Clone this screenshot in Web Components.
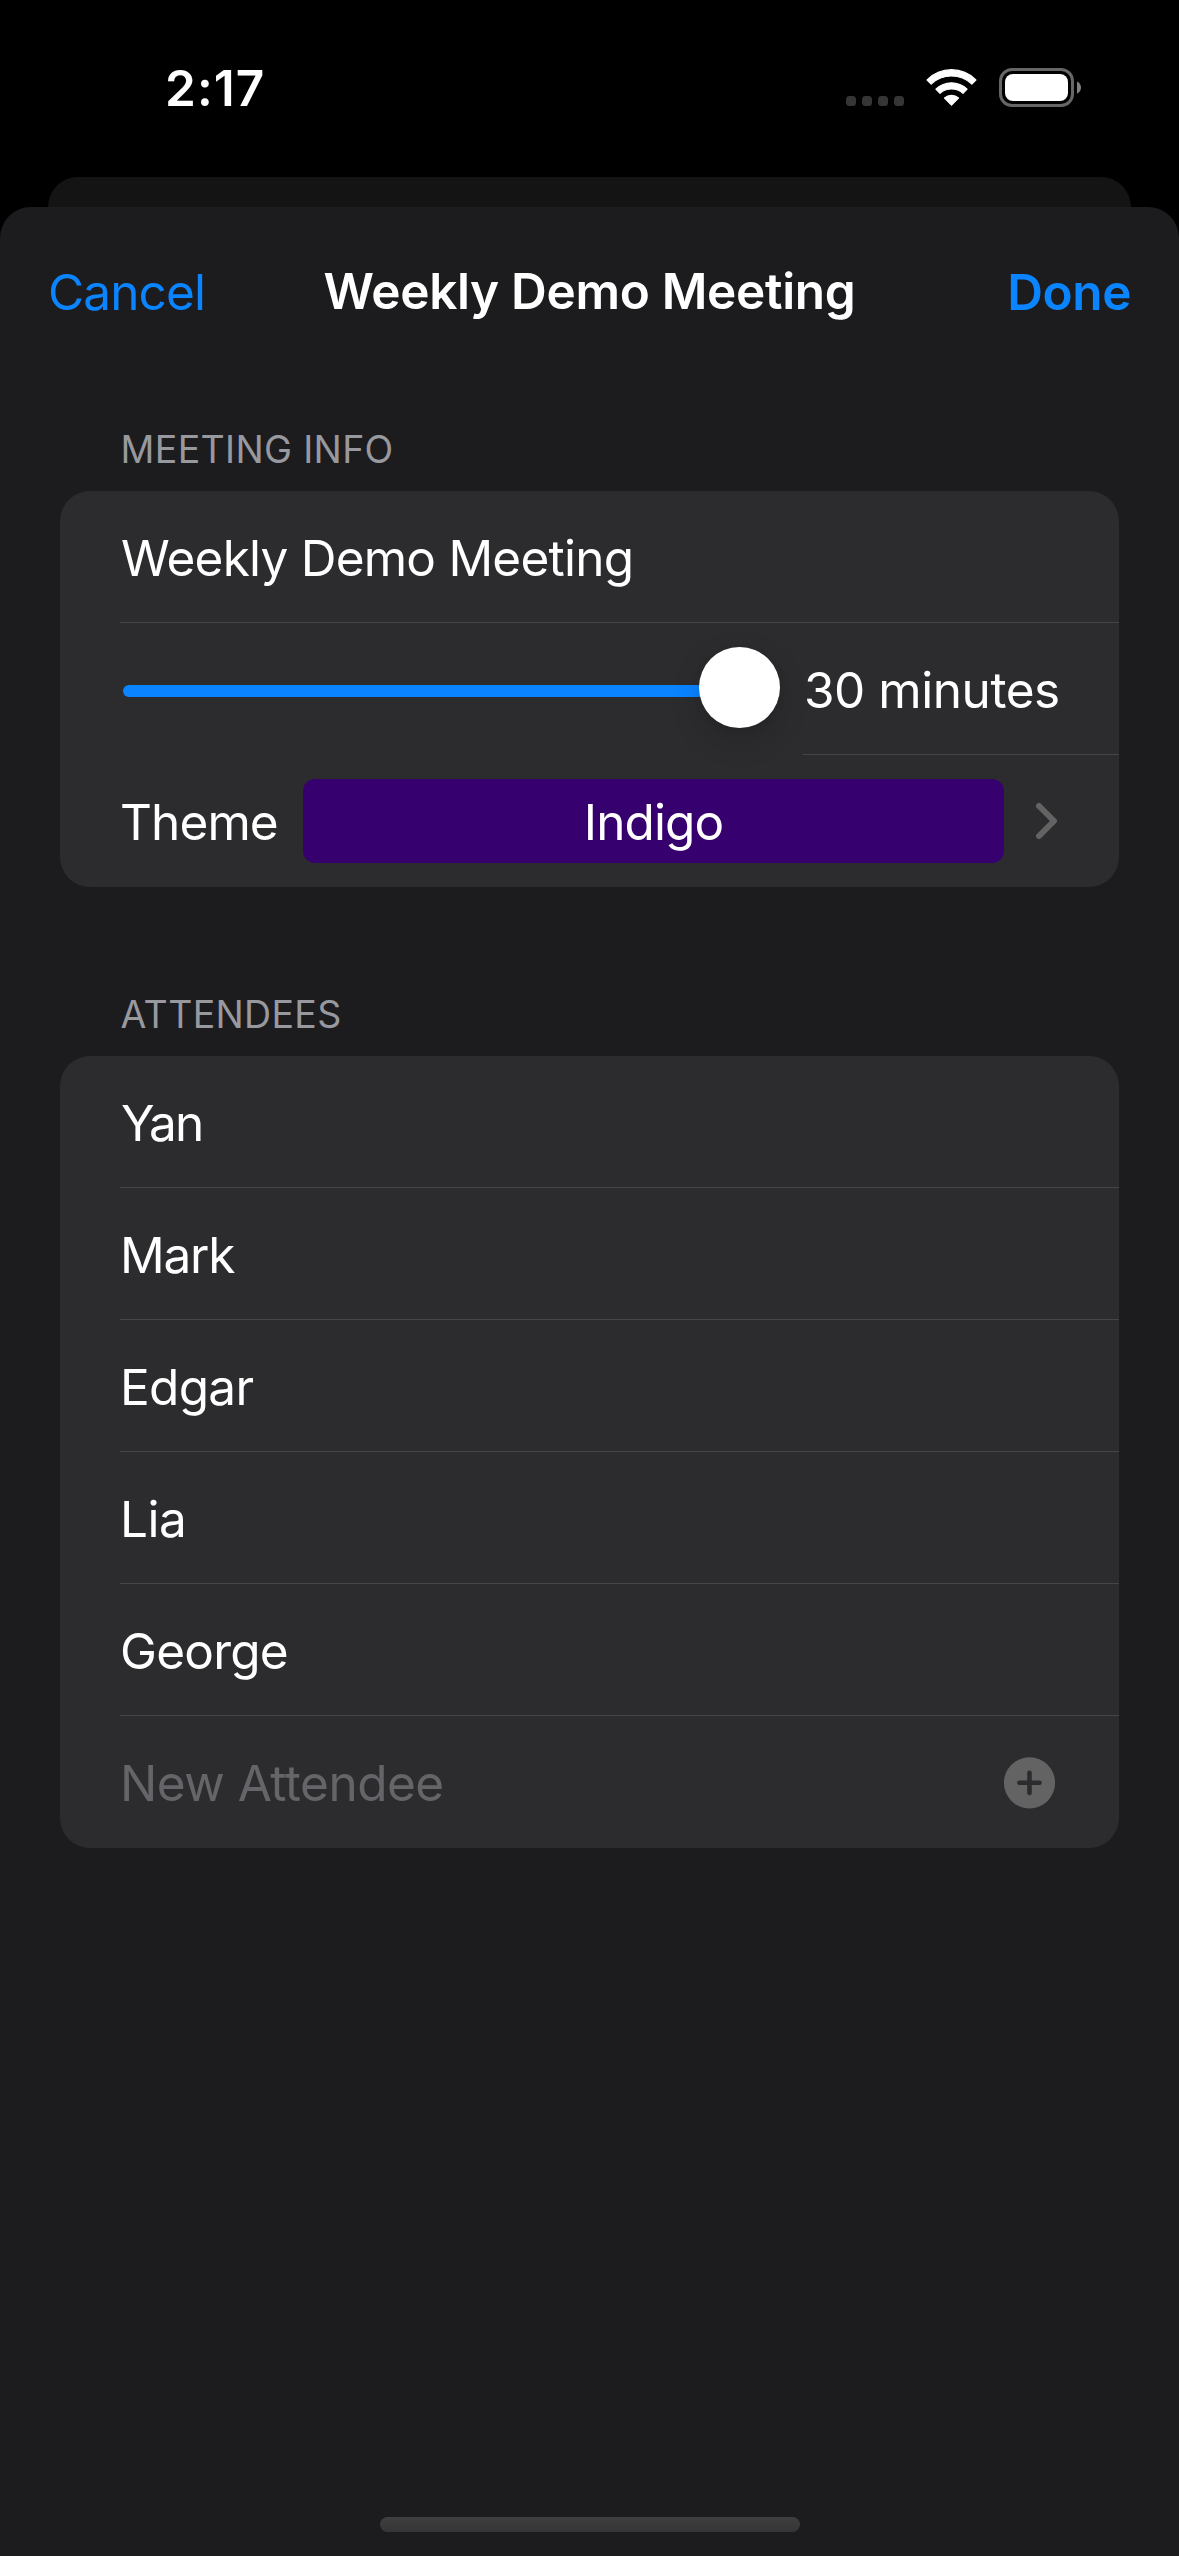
<!DOCTYPE html>
<html lang="en">
<head>
<meta charset="utf-8">
<title>Weekly Demo Meeting</title>
<style>
  html, body { margin: 0; height: 100%; background: #000; }
  body { font: 400 49.5px/60px Inter, "Liberation Sans", sans-serif; color: #fff; }
</style>
</head>
<body>
<phone-screen>
  <status-bar slot="status">2:17</status-bar>
  <nav-bar slot="nav">
    <span slot="cancel" style="letter-spacing:-.86px">Cancel</span>
    <span slot="title" style="letter-spacing:-.31px">Weekly Demo Meeting</span>
    <span slot="done" style="letter-spacing:-.4px">Done</span>
  </nav-bar>
  <form-section>
    <span slot="header">MEETING INFO</span>
    <form-row divider><row-text style="letter-spacing:-.77px;margin-left:1px">Weekly Demo Meeting</row-text></form-row>
    <form-row divider style="--inset:743px">
      <value-slider></value-slider>
      <row-text style="letter-spacing:-.45px;width:255px;margin-left:21px">30 minutes</row-text>
    </form-row>
    <form-row>
      <row-text style="letter-spacing:-.9px;width:183px">Theme</row-text>
      <theme-chip><row-text style="letter-spacing:-.9px">Indigo</row-text></theme-chip>
      <chevron-icon></chevron-icon>
    </form-row>
  </form-section>
  <form-section>
    <span slot="header">ATTENDEES</span>
    <form-row divider><row-text style="letter-spacing:-2px;margin-left:1px">Yan</row-text></form-row>
    <form-row divider><row-text style="letter-spacing:-1.2px">Mark</row-text></form-row>
    <form-row divider><row-text style="letter-spacing:-.7px">Edgar</row-text></form-row>
    <form-row divider><row-text style="letter-spacing:-.5px">Lia</row-text></form-row>
    <form-row divider><row-text style="letter-spacing:-.76px">George</row-text></form-row>
    <form-row>
      <row-text style="letter-spacing:-.5px;color:#656569;flex:1">New Attendee</row-text>
      <add-button></add-button>
    </form-row>
  </form-section>
</phone-screen>

<script>
const define = (name, html) => customElements.define(name, class extends HTMLElement {
  constructor() {
    super();
    this.attachShadow({ mode: 'open' }).innerHTML = html;
  }
});

define('phone-screen', `
  <style>
    :host { display: flex; flex-direction: column; width: 1179px; height: 2556px; background: #000; overflow: hidden; }
    .back { flex: none; height: 60px; margin: 1px 48px -30px; border-radius: 30px 30px 0 0; background: #141414; }
    .sheet { flex: 1; display: flex; flex-direction: column; background: #1c1c1e; border-radius: 31px 31px 0 0; }
    .form { flex: 1; display: flex; flex-direction: column; gap: 104px; padding: 51px 60px 0; }
    .home { flex: none; align-self: center; width: 420px; height: 15px; margin-bottom: 24px; border-radius: 8px; background: linear-gradient(#3f3f3f, #353535); }
  </style>
  <slot name="status"></slot>
  <div class="back"></div>
  <div class="sheet">
    <slot name="nav"></slot>
    <div class="form"><slot></slot></div>
    <div class="home"></div>
  </div>`);

define('status-bar', `
  <style>
    :host { display: flex; align-items: center; flex: none; height: 176px; box-sizing: border-box; padding: 0 98px 0 165px; }
    .time { flex: 1; font-weight: 600; letter-spacing: 1.1px; }
    .icons { display: flex; gap: 22px; }
    svg { display: block; }
  </style>
  <div class="time"><slot></slot></div>
  <div class="icons">
    <svg width="58" height="40" fill="#353535">
      <rect x="0" y="28" width="10" height="10" rx="3.5"/><rect x="16" y="28" width="10" height="10" rx="3.5"/>
      <rect x="32" y="28" width="10" height="10" rx="3.5"/><rect x="48" y="28" width="10" height="10" rx="3.5"/>
    </svg>
    <svg width="51" height="40" fill="#fff" stroke="#fff" stroke-width="1.2" stroke-linejoin="round">
      <path d="M1.1 12A34 34 0 0 1 49.9 12L45.8 16.1A29.5 29.5 0 0 0 5.2 16.1Z"/>
      <path d="M9.9 21.2A22.3 22.3 0 0 1 41.1 21.2L37 25.3A17.5 17.5 0 0 0 14 25.3Z"/>
      <path d="M18.5 30A10.5 10.5 0 0 1 32.5 30L25.5 37.2Z"/>
    </svg>
    <svg width="82" height="40">
      <rect x="1.5" y="1.5" width="72" height="36" rx="11.5" fill="none" stroke="#666" stroke-width="3"/>
      <rect x="6" y="6" width="63" height="27" rx="8" fill="#fff"/>
      <path d="M78 13.4C80.6 14.6 82 17 82 19.6S80.6 24.6 78 25.8Z" fill="#808080"/>
    </svg>
  </div>`);

define('nav-bar', `
  <style>
    :host { display: grid; grid-template-columns: 1fr auto 1fr; align-items: center; flex: none; height: 168px; box-sizing: border-box; padding: 0 48px; }
    .action { color: #0a84ff; padding-top: 2px; }
    .title, .done { font-weight: 600; }
    .done { text-align: right; }
  </style>
  <div class="action"><slot name="cancel"></slot></div>
  <div class="title"><slot name="title"></slot></div>
  <div class="action done"><slot name="done"></slot></div>`);

define('form-section', `
  <style>
    :host { display: flex; flex-direction: column; }
    .header { padding: 1px 60px 18px 60.6px; font-size: 37.5px; line-height: 46px; letter-spacing: .32px; color: #98989f; }
    .card { display: flex; flex-direction: column; background: #2c2c2e; border-radius: 30px; }
  </style>
  <div class="header"><slot name="header"></slot></div>
  <div class="card"><slot></slot></div>`);

define('form-row', `
  <style>
    :host { display: flex; align-items: center; height: 132px; box-sizing: border-box; padding: 0 60px; }
    :host([divider]) { background: linear-gradient(#464648, #464648) no-repeat right bottom / calc(100% - var(--inset, 60px)) 1px; }
  </style>
  <slot></slot>`);

define('row-text', `
  <style>:host { display: block; flex: none; padding-top: 2px; white-space: nowrap; }</style>
  <slot></slot>`);

define('value-slider', `
  <style>
    :host { display: flex; align-items: center; flex: 1; padding: 0 3px; }
    .track { flex: 1; height: 12px; margin-top: 4px; border-radius: 6px; background: #0a84ff; }
    .thumb { width: 81px; height: 81px; margin: 0 0 3px -20px; border-radius: 50%; background: #fff; box-shadow: 0 12px 32px rgba(0,0,0,.14), 0 2px 8px rgba(0,0,0,.07); }
  </style>
  <div class="track"></div><div class="thumb"></div>`);

define('theme-chip', `
  <style>
    :host { display: flex; align-items: center; justify-content: center; flex: 1; height: 84px; margin-right: 32px; border-radius: 12px; background: #36006e; }
  </style>
  <slot></slot>`);

define('chevron-icon', `
  <style>:host { display: block; flex: none; } svg { display: block; }</style>
  <svg width="23" height="38" fill="none" stroke="#636363" stroke-width="6" stroke-linecap="round" stroke-linejoin="round">
    <path d="M3 4L18 19L3 34"/>
  </svg>`);

define('add-button', `
  <style>:host { display: block; flex: none; margin-right: 3px; } svg { display: block; }</style>
  <svg width="53" height="53">
    <circle cx="26.5" cy="26.8" r="25.6" fill="#636364"/>
    <path d="M16.4 26.8H36.6M26.5 16.7V36.9" stroke="#2c2c2e" stroke-width="4.6" stroke-linecap="round"/>
  </svg>`);
</script>
</body>
</html>
